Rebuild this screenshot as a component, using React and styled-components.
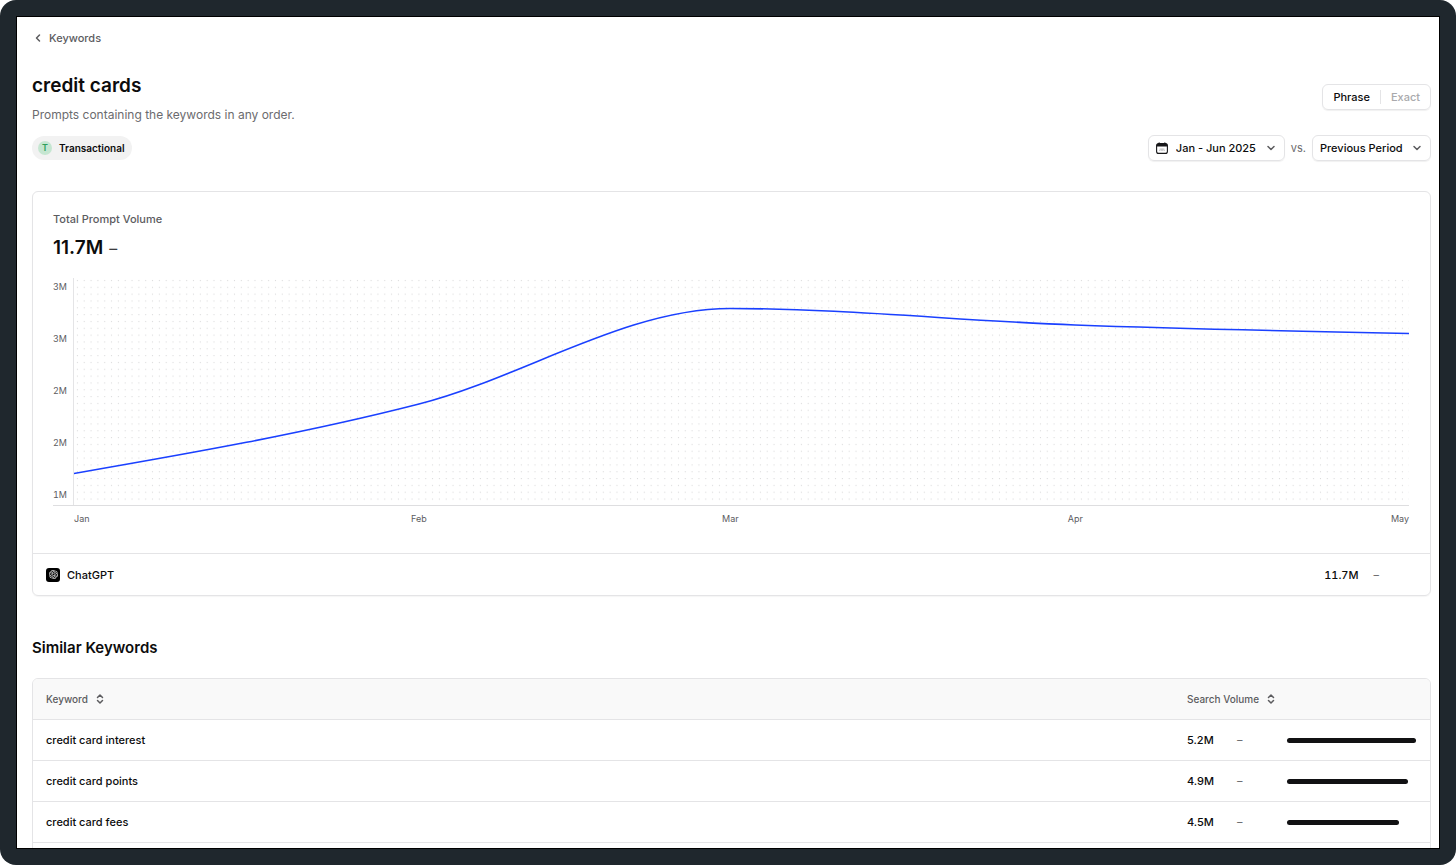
import React, { useState } from 'react';
import styled, { createGlobalStyle } from 'styled-components';
import { ChevronLeft, ChevronDown, ChevronsUpDown } from 'lucide-react';
import { SiOpenai } from 'react-icons/si';

const GlobalStyle = createGlobalStyle`
  * {
    box-sizing: border-box;
  }
  body {
    margin: 0;
    background: #fff;
    color: #0c0c0d;
    font-family: Inter, 'Liberation Sans', sans-serif;
    font-size: 11px;
    line-height: 16px;
  }
  button, select {
    font: inherit;
    color: inherit;
  }
`;

const Frame = styled.div`
  display: flex;
  height: 100vh;
  padding: 16px;
  border-radius: 16px;
  background: #1f272d;
`;

const Screen = styled.main`
  flex: 1;
  min-width: 0;
  overflow: hidden;
  padding: 13px 8px 0 15px;
  border: 1px solid #000;
  background: #fff;
`;

const BackLink = styled.a`
  display: inline-flex;
  align-items: center;
  gap: 5px;
  color: #5c5c5f;
  font-weight: 500;
  text-decoration: none;
`;

const Header = styled.header`
  display: flex;
  justify-content: space-between;
  align-items: flex-end;
  margin-top: 24px;
`;

const Title = styled.h1`
  margin: 0;
  font-size: 19px;
  font-weight: 600;
  line-height: 28px;
`;

const Description = styled.p`
  margin: 5px 0 0;
  color: #6b6b6e;
  font-size: 12px;
  line-height: 20px;
`;

const Toggle = styled.div`
  display: flex;
  align-items: center;
  height: 26px;
  margin-bottom: 15px;
  border: 1px solid #e4e4e6;
  border-radius: 6px;
  box-shadow: 0 1px 1px rgba(0, 0, 0, 0.06);
`;

const ToggleButton = styled.button`
  padding: 0 10px;
  border: 0;
  background: none;
  font-weight: 500;
  line-height: 14px;
  color: ${(props) => (props.$active ? '#0c0c0d' : '#a9a9ac')};
  & + & {
    border-left: 1px solid #e4e4e6;
  }
`;

const Filters = styled.div`
  display: flex;
  justify-content: space-between;
  align-items: center;
  margin-top: 10px;
`;

const Tag = styled.span`
  display: flex;
  align-items: center;
  gap: 7px;
  height: 24px;
  padding: 0 7px 0 6px;
  border-radius: 12px;
  background: #f2f2f2;
  font-size: 10px;
  font-weight: 600;
`;

const TagLetter = styled.span`
  width: 14px;
  border-radius: 7px;
  background: #c5e6d1;
  color: #2f9e5b;
  font-size: 9px;
  line-height: 14px;
  text-align: center;
`;

const Periods = styled.div`
  display: flex;
  align-items: center;
  gap: 6px;
  color: #6b6b6e;
`;

const SelectBox = styled.label`
  display: flex;
  align-items: center;
  height: 26px;
  padding: 0 7px;
  border: 1px solid #e4e4e6;
  border-radius: 6px;
  box-shadow: 0 1px 1px rgba(0, 0, 0, 0.06);
  color: #0c0c0d;
  svg {
    flex: none;
  }
`;

const Select = styled.select`
  appearance: none;
  margin: 0 8px 0 0;
  padding: 0;
  border: 0;
  background: none;
  font-weight: 500;
  svg + & {
    margin-left: 8px;
  }
`;

const Card = styled.section`
  margin-top: 30px;
  border: 1px solid #e4e4e6;
  border-radius: 6px;
  box-shadow: 0 1px 1px rgba(0, 0, 0, 0.04);
`;

const CardBody = styled.div`
  padding: 19px 21px 28px 20px;
`;

const CardLabel = styled.h2`
  margin: 0;
  color: #5c5c5f;
  font-size: 11px;
  font-weight: 500;
  line-height: 16px;
`;

const Total = styled.p`
  display: flex;
  gap: 6px;
  margin: 7px 0 0;
  font-size: 19px;
  font-weight: 600;
  line-height: 28px;
`;

const Dash = styled.span`
  color: #6b6b6e;
  font-weight: 400;
`;

const TotalDash = styled(Dash)`
  color: #3c3c3f;
  font-size: 16px;
`;

const Chart = styled.div`
  display: flex;
  height: 228px;
  margin-top: 16px;
  border-bottom: 1px solid #dedee0;
`;

const YAxis = styled.div`
  display: flex;
  flex-direction: column;
  justify-content: space-between;
  width: 20px;
  padding: 3px 0 4px;
  color: #5c5c5f;
  font-size: 9px;
  font-variant-numeric: tabular-nums;
  line-height: 12px;
`;

const Plot = styled.svg`
  flex: 1;
  min-width: 0;
  height: 100%;
  border-left: 1px solid #e4e4e6;
`;

const XAxis = styled.div`
  display: flex;
  margin: 7px 0 0 21px;
  color: #5c5c5f;
  font-size: 9px;
  line-height: 12px;
`;

const Month = styled.div`
  display: flex;
  flex: ${(props) => props.$days} 0 0;
`;

const MonthName = styled.span`
  display: flex;
  justify-content: ${(props) => props.$align};
  width: 0;
`;

const Source = styled.div`
  display: flex;
  align-items: center;
  height: 42px;
  padding: 0 51px 0 13px;
  border-top: 1px solid #e4e4e6;
  font-weight: 500;
`;

const SourceLogo = styled.span`
  display: flex;
  align-items: center;
  justify-content: center;
  width: 14px;
  height: 14px;
  margin-right: 7px;
  border-radius: 3px;
  background: #000;
  color: #fff;
`;

const SourceValue = styled.span`
  margin: 0 15px 0 auto;
  font-variant-numeric: tabular-nums;
`;

const SectionTitle = styled.h2`
  margin: 40px 0 0;
  font-size: 15px;
  font-weight: 600;
  line-height: 24px;
`;

const TableCard = styled.div`
  overflow: hidden;
  min-height: 240px;
  margin-top: 18px;
  border: 1px solid #e4e4e6;
  border-radius: 6px;
`;

const Table = styled.table`
  width: 100%;
  border-spacing: 0;
  text-align: left;
  font-weight: 500;
  th, td {
    height: 41px;
    padding: 0 14px 0 13px;
    border-bottom: 1px solid #e4e4e6;
  }
  th {
    background: #f9f9f9;
  }
  th:last-child, td:last-child {
    width: 256px;
  }
`;

const SortButton = styled.button`
  display: flex;
  align-items: center;
  gap: 6px;
  padding: 0;
  border: 0;
  background: none;
  color: #5c5c5f;
  font-size: 10px;
  font-weight: 500;
`;

const Volume = styled.div`
  display: grid;
  grid-template-columns: 50px 50px 1fr;
  align-items: center;
`;

const Bar = styled.div`
  height: 5px;
  border-radius: 3px;
  background: #111113;
`;

const yTicks = ['3M', '3M', '2M', '2M', '1M'];

const months = [
  { name: 'Jan', days: 31, align: 'flex-start' },
  { name: 'Feb', days: 28, align: 'center' },
  { name: 'Mar', days: 31, align: 'center' },
  { name: 'Apr', days: 30, align: 'center' },
  { name: 'May', days: 0, align: 'flex-end' },
];

const keywords = [
  { name: 'credit card interest', volume: '5.2M', share: 100 },
  { name: 'credit card points', volume: '4.9M', share: 94 },
  { name: 'credit card fees', volume: '4.5M', share: 87 },
];

function CalendarIcon() {
  return (
    <svg width="12" height="12" viewBox="0 0 12 12" fill="none">
      <rect x="0.6" y="1.6" width="10.8" height="9.8" rx="2" stroke="#18181a" strokeWidth="1.1" />
      <path d="M0.6 4.6V3.4a2 2 0 0 1 2-2h6.8a2 2 0 0 1 2 2v1.2z" fill="#18181a" />
      <path d="M3.2 0.4v2M8.8 0.4v2" stroke="#18181a" strokeWidth="1.2" />
      <path d="M3.2 8.4h1M4.2 6.4v2M5.4 6.4v2h1.2v-2M7.8 6.4v2h1" stroke="#a0a0a3" strokeWidth="0.6" />
    </svg>
  );
}

function VolumeChart() {
  return (
    <>
      <Chart>
        <YAxis>
          {yTicks.map((tick, i) => <span key={i}>{tick}</span>)}
        </YAxis>
        <Plot viewBox="0 0 1335 227" preserveAspectRatio="none">
          <defs>
            <pattern id="dots" width="6.83" height="6.83" patternUnits="userSpaceOnUse">
              <circle cx="3.4" cy="2.5" r="0.65" fill="#d6d6d8" />
            </pattern>
          </defs>
          <rect width="1335" height="224" fill="url(#dots)" />
          <path
            d="M0 195.5C115 175.5 230 155.5 345 126C448.7 99.4 552.3 30.5 656 30.5C771 30.5 886 42.8 1001 47C1112.3 51 1223.7 53.3 1335 55.5"
            fill="none"
            stroke="#1a40ff"
            strokeWidth="1.6"
            vectorEffect="non-scaling-stroke"
          />
        </Plot>
      </Chart>
      <XAxis>
        {months.map((month) => (
          <Month key={month.name} $days={month.days}>
            <MonthName $align={month.align}>{month.name}</MonthName>
          </Month>
        ))}
      </XAxis>
    </>
  );
}

function App() {
  const [match, setMatch] = useState('Phrase');

  return (
    <>
      <GlobalStyle />
      <Frame>
        <Screen>
          <BackLink href="#keywords">
            <ChevronLeft size={12} strokeWidth={3} />
            Keywords
          </BackLink>
          <Header>
            <div>
              <Title>credit cards</Title>
              <Description>Prompts containing the keywords in any order.</Description>
            </div>
            <Toggle>
              {['Phrase', 'Exact'].map((name) => (
                <ToggleButton key={name} $active={match === name} onClick={() => setMatch(name)}>
                  {name}
                </ToggleButton>
              ))}
            </Toggle>
          </Header>
          <Filters>
            <Tag>
              <TagLetter>T</TagLetter>
              Transactional
            </Tag>
            <Periods>
              <SelectBox>
                <CalendarIcon />
                <Select aria-label="Period">
                  <option>Jan - Jun 2025</option>
                </Select>
                <ChevronDown size={12} strokeWidth={3} color="#5c5c5f" />
              </SelectBox>
              vs.
              <SelectBox>
                <Select aria-label="Compare with">
                  <option>Previous Period</option>
                </Select>
                <ChevronDown size={12} strokeWidth={3} color="#5c5c5f" />
              </SelectBox>
            </Periods>
          </Filters>
          <Card>
            <CardBody>
              <CardLabel>Total Prompt Volume</CardLabel>
              <Total>11.7M <TotalDash>–</TotalDash></Total>
              <VolumeChart />
            </CardBody>
            <Source>
              <SourceLogo><SiOpenai size={9} /></SourceLogo>
              ChatGPT
              <SourceValue>11.7M</SourceValue>
              <Dash>–</Dash>
            </Source>
          </Card>
          <SectionTitle>Similar Keywords</SectionTitle>
          <TableCard>
            <Table>
              <thead>
                <tr>
                  <th><SortButton>Keyword <ChevronsUpDown size={12} strokeWidth={3} /></SortButton></th>
                  <th><SortButton>Search Volume <ChevronsUpDown size={12} strokeWidth={3} /></SortButton></th>
                </tr>
              </thead>
              <tbody>
                {keywords.map((keyword) => (
                  <tr key={keyword.name}>
                    <td>{keyword.name}</td>
                    <td>
                      <Volume>
                        <span>{keyword.volume}</span>
                        <Dash>–</Dash>
                        <Bar style={{ width: `${keyword.share}%` }} />
                      </Volume>
                    </td>
                  </tr>
                ))}
              </tbody>
            </Table>
          </TableCard>
        </Screen>
      </Frame>
    </>
  );
}

export default App;
